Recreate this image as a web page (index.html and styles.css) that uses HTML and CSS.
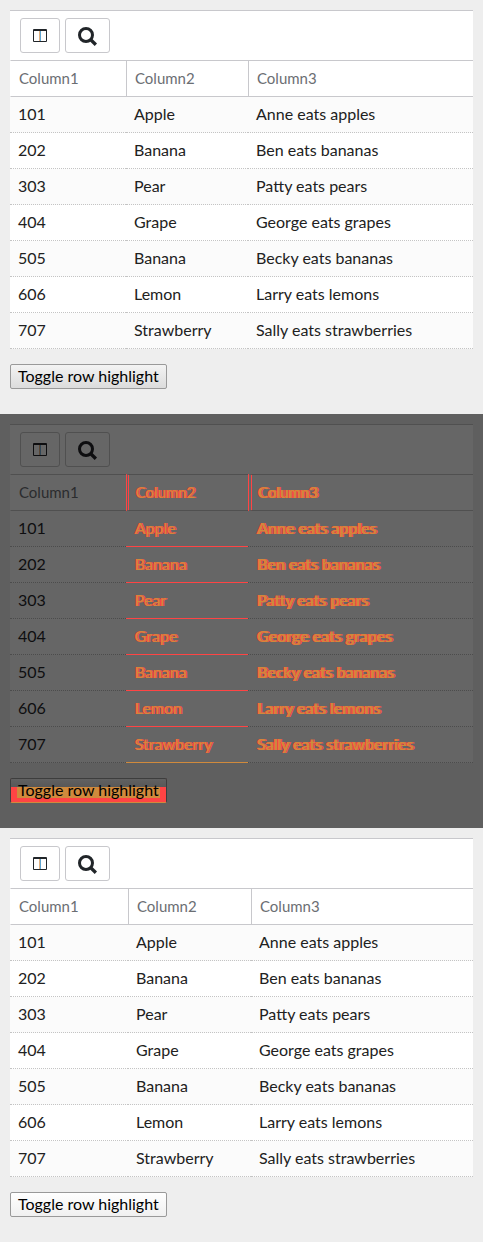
FILE: index.html
```
<!DOCTYPE html>
<html lang="en">
<head>
<meta charset="utf-8">
<title>Row highlight table</title>
<link rel="stylesheet" href="styles.css">
</head>
<body>
<main id="panels"></main>
<template id="panel-template">
  <section class="panel">
    <div class="grid">
      <div class="toolbar">
        <button type="button" class="tool" aria-label="Columns">
          <svg width="14" height="13" viewBox="0 0 14 13"><path class="ink" d="M1 0h12a1 1 0 0 1 1 1v11a1 1 0 0 1-1 1H1a1 1 0 0 1-1-1V1a1 1 0 0 1 1-1zM1 2v10h12V2z" fill-rule="evenodd"/><path class="rule-warm" d="M6 2h1v10H6z"/><path class="rule-cool" d="M7 2h1v10H7z"/></svg>
        </button>
        <button type="button" class="tool tool-search" aria-label="Search">
          <svg width="19" height="19" viewBox="0 0 19 19"><circle class="ring" cx="8" cy="8" r="6.5"/><path class="handle" d="M12.5 12.5l5.4 5.2"/></svg>
        </button>
      </div>
      <table>
        <colgroup><col class="c1"><col class="c2"><col></colgroup>
        <thead><tr><th>Column1</th><th>Column2</th><th>Column3</th></tr></thead>
        <tbody></tbody>
      </table>
    </div>
    <button type="button" class="toggle">Toggle row highlight</button>
  </section>
</template>
<script src="app.js"></script>
</body>
</html>
```
FILE: styles.css
```
* { box-sizing: border-box; }

body {
  margin: 0;
  background: #eee;
  color: #212121;
  font: 16px/20px Lato, "Liberation Sans", sans-serif;
}

.panel {
  --line: #c8c8cc;
  --surface: #fff;
  --stripe: #fbfbfb;
  --ink: #212529;
  padding: 10px 10px 25px;
}

.grid {
  background: var(--surface);
  border-top: 1px solid var(--line);
}

.toolbar {
  display: flex;
  gap: 5px;
  padding: 7px 10px;
}

.tool {
  display: flex;
  align-items: center;
  justify-content: center;
  width: 40px;
  height: 35px;
  padding: 0;
  background: transparent;
  border: 1px solid var(--line);
  border-radius: 3px;
}

.tool-search { width: 45px; padding-top: 2px; }

.ink { fill: var(--ink); }
.rule-warm { fill: #e0b080; }
.rule-cool { fill: #5fa4cf; }
.ring { fill: none; stroke: var(--ink); stroke-width: 3; }
.handle { stroke: var(--ink); stroke-width: 3.4; }

table {
  width: 100%;
  table-layout: fixed;
  border-collapse: separate;
  border-spacing: 0;
}

.c1 { width: 116px; }
.c2 { width: 122px; }
.after .c1 { width: 118px; }
.after .c2 { width: 123px; }

th, td { text-align: left; white-space: nowrap; }

th {
  height: 37px;
  padding: 0 8px 2px;
  color: #6b6e73;
  font-size: 15px;
  font-weight: 400;
  border: 1px solid var(--line);
  border-right: 0;
}

th:first-child { border-left-color: transparent; }

td {
  height: 36px;
  padding: 0 8px 1px;
  border-bottom: 1px dotted #c4c4c4;
}

tbody tr:nth-child(odd) { background: var(--stripe); }

.toggle {
  display: block;
  height: 25px;
  margin-top: 15px;
  padding: 0 7px 1px;
  font: inherit;
  color: #000;
  background: linear-gradient(#f3f3f3, #dcdcdc);
  border: 1px solid #999;
  border-radius: 2px;
}

.after .toggle { background: linear-gradient(#fff, #f0f0f0); }

.diff {
  --line: #505050;
  --surface: #666;
  --stripe: #656565;
  --ink: #0e0e10;
  --changed: #ff4444;
  --edge: #d08a3c;
  background: #5f5f5f;
  color: #0e0e10;
}

.diff .rule-warm { fill: #5a4634; }
.diff .rule-cool { fill: #304656; }
.diff th { color: #2b2c2e; }
.diff td { border-bottom-color: #4c4c4c; }

.diff th:nth-child(n + 2),
.diff td:nth-child(n + 2) {
  color: var(--edge);
  text-shadow: -1px 0 var(--changed), 1px 0 var(--changed);
}

.diff th:nth-child(3),
.diff td:nth-child(3) {
  text-shadow: -1px 0 var(--changed), 1px 0 var(--edge), 2px 0 var(--changed);
}

.diff th:nth-child(2) { border-left: 3px double var(--changed); padding-left: 7px; }
.diff th:nth-child(3) { border-left: 4px double var(--changed); padding-left: 6px; }
.diff td:nth-child(n + 2) { padding-left: 9px; }
.diff td:nth-child(2) { border-bottom: 1px solid var(--changed); }
.diff tr:last-child td:nth-child(2) { border-bottom-color: var(--edge); }

.diff .toggle {
  background:
    linear-gradient(#616161, #585858) 0 0 / 100% 8px no-repeat,
    linear-gradient(var(--edge), var(--edge)) 50% 0 / calc(100% - 12px) 19px no-repeat,
    var(--changed);
  border-color: #3d3d3d;
  border-bottom-color: var(--edge);
}
```
FILE: app.js
```
const rows = [
  ["101", "Apple", "Anne eats apples"],
  ["202", "Banana", "Ben eats bananas"],
  ["303", "Pear", "Patty eats pears"],
  ["404", "Grape", "George eats grapes"],
  ["505", "Banana", "Becky eats bananas"],
  ["606", "Lemon", "Larry eats lemons"],
  ["707", "Strawberry", "Sally eats strawberries"]
];

const template = document.getElementById("panel-template");

for (const state of ["before", "diff", "after"]) {
  const panel = template.content.cloneNode(true);
  panel.querySelector(".panel").classList.add(state);
  const body = panel.querySelector("tbody");
  for (const row of rows) {
    const tr = body.insertRow();
    for (const value of row) tr.insertCell().textContent = value;
  }
  document.getElementById("panels").append(panel);
}
```
